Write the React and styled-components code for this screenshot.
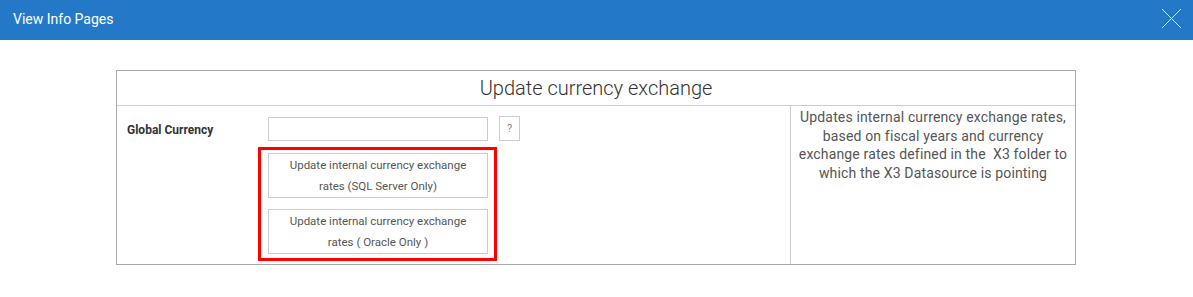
import React from 'react';
import styled, { createGlobalStyle } from 'styled-components';

const GlobalStyle = createGlobalStyle`
  body {
    margin: 0;
    background: #fff;
    font-family: Roboto, "Liberation Sans", sans-serif;
  }
`;

const Header = styled.header`
  height: 40px;
  background-color: #2478c8;
  display: flex;
  align-items: center;
  justify-content: space-between;
  padding: 0 11px 0 13px;
`;

const HeaderTitle = styled.h1`
  margin: 0;
  font-size: 14px;
  font-weight: 400;
  color: #fff;
  padding-bottom: 2px;
`;

const CloseButton = styled.button`
  border: 0;
  background: none;
  padding: 0;
  width: 21px;
  height: 21px;
  margin-bottom: 4px;
  cursor: pointer;
  display: flex;
`;

const Page = styled.main`
  padding: 30px 0 0 116px;
`;

const Panel = styled.section`
  width: 960px;
  border: 1px solid #aaa;
  box-sizing: border-box;
`;

const PanelTitle = styled.h2`
  margin: 0;
  height: 34px;
  display: flex;
  align-items: center;
  justify-content: center;
  font-size: 20px;
  font-weight: 300;
  color: #333;
  border-bottom: 1px solid #ccc;
`;

const PanelBody = styled.div`
  display: grid;
  grid-template-columns: 674px 1fr;
  height: 158px;
`;

const FormCell = styled.div`
  border-right: 1px solid #ccc;
  padding: 10px 0 0 10px;
  display: flex;
  flex-direction: column;
`;

const FieldRow = styled.div`
  display: flex;
  align-items: center;
`;

const Label = styled.label`
  width: 141px;
  font-size: 12px;
  font-weight: 700;
  color: #333;
  padding-top: 3px;
`;

const TextInput = styled.input`
  width: 220px;
  height: 24px;
  box-sizing: border-box;
  border: 1px solid #ccc;
  outline: none;
`;

const HelpButton = styled.button`
  margin-left: 11px;
  width: 21px;
  height: 25px;
  box-sizing: border-box;
  border: 1px solid #ccc;
  background: #fff;
  color: #888;
  font-family: inherit;
  font-size: 11px;
  padding: 0;
`;

const Highlight = styled.div`
  margin: 6px 0 0 131px;
  width: 239px;
  box-sizing: border-box;
  border: 3px solid #ff0000;
  padding: 3px 6px 4px 7px;
  display: flex;
  flex-direction: column;
  gap: 11px;
`;

const ActionButton = styled.button`
  width: 220px;
  height: 45px;
  box-sizing: border-box;
  border: 1px solid #ccc;
  background: #fff;
  color: #555;
  font-family: inherit;
  font-size: 11.5px;
  line-height: 21px;
  padding: 0 18px;
  text-align: center;
  cursor: pointer;
`;

const Description = styled.p`
  margin: 0;
  padding: 2px 4px 0;
  text-align: center;
  font-size: 14px;
  letter-spacing: 0.15px;
  line-height: 18.5px;
  color: #555;
`;

const App = () => {
  return (
    <>
      <GlobalStyle />
      <Header>
        <HeaderTitle>View Info Pages</HeaderTitle>
        <CloseButton aria-label="Close">
          <svg width="21" height="21" viewBox="0 0 21 21">
            <path d="M1 1 L20 20 M20 1 L1 20" stroke="#d8e6f5" strokeWidth="1" fill="none" />
          </svg>
        </CloseButton>
      </Header>
      <Page>
        <Panel>
          <PanelTitle>Update currency exchange</PanelTitle>
          <PanelBody>
            <FormCell>
              <FieldRow>
                <Label>Global Currency</Label>
                <TextInput type="text" />
                <HelpButton>?</HelpButton>
              </FieldRow>
              <Highlight>
                <ActionButton>Update internal currency exchange rates (SQL Server Only)</ActionButton>
                <ActionButton>Update internal currency exchange rates ( Oracle Only )</ActionButton>
              </Highlight>
            </FormCell>
            <Description>
              Updates internal currency exchange rates, based on fiscal years and currency
              exchange rates defined in the&nbsp; X3 folder to which the X3 Datasource is pointing
            </Description>
          </PanelBody>
        </Panel>
      </Page>
    </>
  );
};

export default App;
